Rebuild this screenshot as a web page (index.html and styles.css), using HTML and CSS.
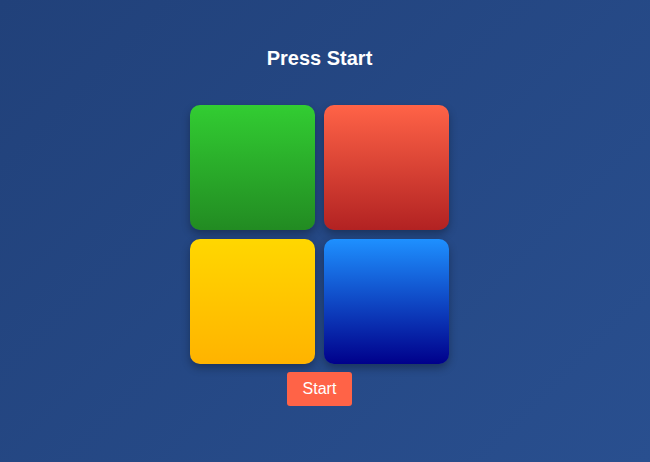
FILE: index.html
```html
<!DOCTYPE html>
<html>
<head>
<meta charset="utf-8">
<link rel="stylesheet" href="styles.css">
</head>
<body>
<div class="app">
  <h2 class="title">Press Start</h2>
  <div class="board">
    <div class="tile green"></div>
    <div class="tile red"></div>
    <div class="tile yellow"></div>
    <div class="tile blue"></div>
  </div>
  <button class="start">Start</button>
</div>
</body>
</html>
```
FILE: styles.css
```css
html, body {
  margin: 0;
  height: 100%;
}
body {
  background: linear-gradient(135deg, #21417a, #294f8f);
  font-family: "Liberation Sans", Arial, sans-serif;
  color: #fff;
}
.app {
  width: 639px;
  display: flex;
  flex-direction: column;
  align-items: center;
  padding-top: 47px;
}
.title {
  margin: 0;
  font-size: 20px;
  line-height: 23px;
  font-weight: bold;
}
.board {
  margin-top: 35px;
  display: grid;
  grid-template-columns: 125px 125px;
  grid-auto-rows: 125px;
  gap: 9px;
}
.tile {
  border-radius: 10px;
  box-shadow: 0 4px 8px rgba(0, 0, 0, 0.3);
}
.green { background: linear-gradient(to bottom, #32cd32, #228b22); }
.red { background: linear-gradient(to bottom, #ff6347, #b22222); }
.yellow { background: linear-gradient(to bottom, #ffd700, #ffb300); }
.blue { background: linear-gradient(to bottom, #1e90ff, #00008b); }
.start {
  margin-top: 8px;
  height: 34px;
  padding: 0 15.5px;
  border: none;
  border-radius: 3px;
  background: #ff6347;
  color: #fff;
  font-family: "Liberation Sans", Arial, sans-serif;
  font-size: 16px;
}
```
